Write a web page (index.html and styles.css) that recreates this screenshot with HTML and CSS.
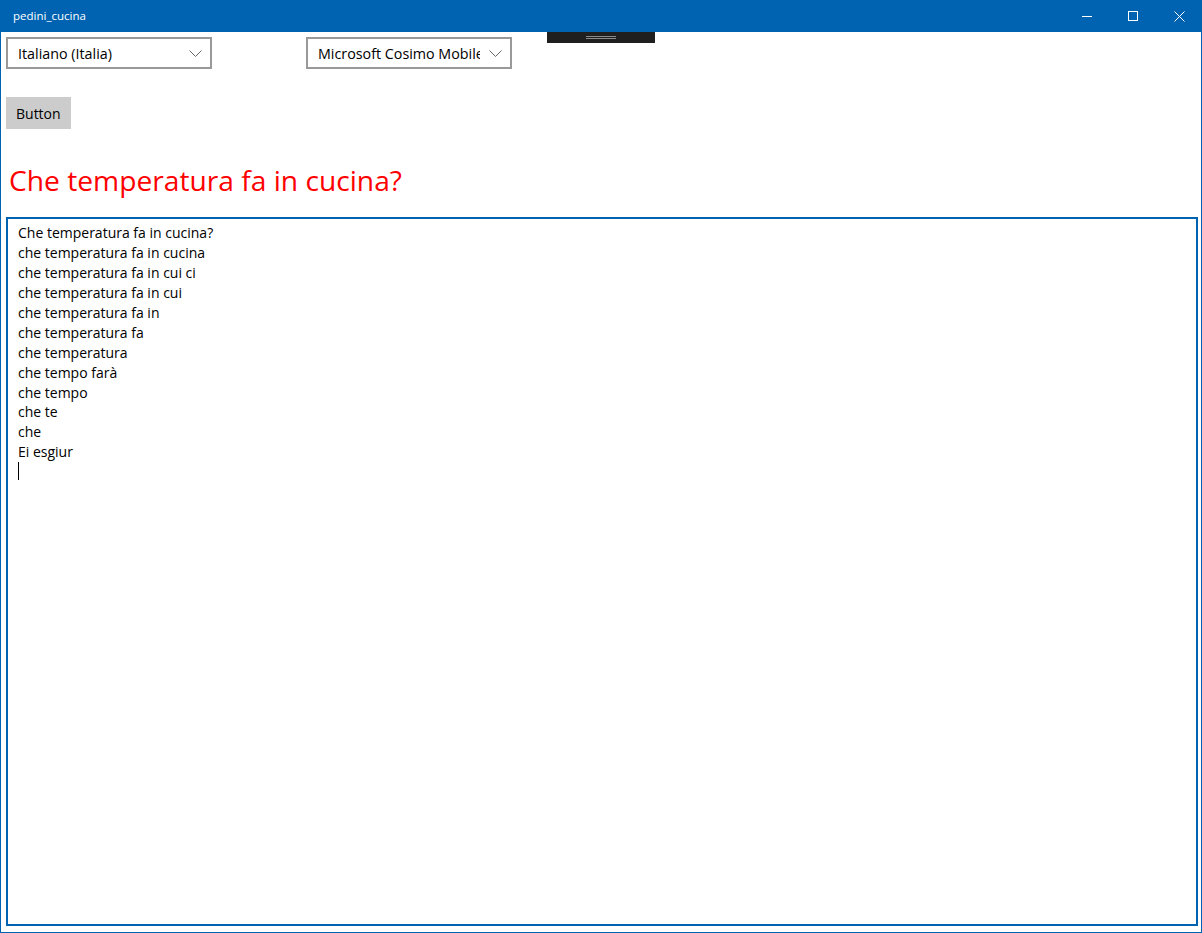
FILE: index.html
```html
<!DOCTYPE html>
<html lang="it">
<head>
<meta charset="utf-8">
<title>pedini_cucina</title>
<link rel="stylesheet" href="styles.css">
</head>
<body>
<div class="window">
  <header class="titlebar">
    <span class="title">pedini_cucina</span>
    <div class="controls">
      <span class="ctl"><svg width="10" height="10" viewBox="0 0 10 10"><path d="M0 5.5H10" stroke="#fff" stroke-width="1" fill="none"/></svg></span>
      <span class="ctl"><svg width="10" height="10" viewBox="0 0 10 10"><rect x="0.5" y="0.5" width="9" height="9" stroke="#fff" stroke-width="1" fill="none"/></svg></span>
      <span class="ctl"><svg width="11" height="11" viewBox="0 0 11 11"><path d="M0.5 0.5L10.5 10.5M10.5 0.5L0.5 10.5" stroke="#fff" stroke-width="1" fill="none"/></svg></span>
    </div>
  </header>
  <main class="content">
    <div class="debugbar"><span class="grip"></span></div>
    <div class="row">
      <div class="select">
        <span class="value">Italiano (Italia)</span>
        <span class="chev"><svg width="13" height="7" viewBox="0 0 13 7"><path d="M0.5 0.5L6.5 6.5L12.5 0.5" stroke="#666" stroke-width="1" fill="none"/></svg></span>
      </div>
      <div class="select">
        <span class="value">Microsoft Cosimo Mobile</span>
        <span class="chev"><svg width="13" height="7" viewBox="0 0 13 7"><path d="M0.5 0.5L6.5 6.5L12.5 0.5" stroke="#666" stroke-width="1" fill="none"/></svg></span>
      </div>
    </div>
    <button class="btn">Button</button>
    <h1 class="heading">Che temperatura fa in cucina?</h1>
    <div class="textbox">
      <div class="line">Che temperatura fa in cucina?</div>
      <div class="line">che temperatura fa in cucina</div>
      <div class="line">che temperatura fa in cui ci</div>
      <div class="line">che temperatura fa in cui</div>
      <div class="line">che temperatura fa in</div>
      <div class="line">che temperatura fa</div>
      <div class="line">che temperatura</div>
      <div class="line">che tempo farà</div>
      <div class="line">che tempo</div>
      <div class="line">che te</div>
      <div class="line">che</div>
      <div class="line">Ei esgiur</div>
      <div class="line"><span class="caret"></span></div>
    </div>
  </main>
</div>
</body>
</html>
```

FILE: styles.css
```css
* { box-sizing: border-box; }
html, body { margin: 0; padding: 0; }
body {
  width: 1202px;
  height: 933px;
  overflow: hidden;
  background: #fff;
  font-family: "Open Sans", "Noto Sans", sans-serif;
  color: #000;
}
.window {
  width: 1202px;
  height: 933px;
  display: flex;
  flex-direction: column;
}
.titlebar {
  height: 32px;
  flex: none;
  background: #0063b1;
  display: flex;
  align-items: center;
  justify-content: space-between;
}
.title {
  color: #fff;
  font-size: 11.5px;
  line-height: 14px;
  padding-left: 13px;
  margin-top: -1px;
}
.controls { display: flex; height: 32px; }
.ctl {
  width: 46px;
  height: 32px;
  display: flex;
  align-items: center;
  justify-content: center;
}
.ctl svg { display: block; }
.content {
  position: relative;
  flex: 1;
  border: 1px solid #0063b1;
  border-top: none;
  padding: 5px 3px 6px 5px;
  display: flex;
  flex-direction: column;
  align-items: flex-start;
  min-height: 0;
}
.debugbar {
  position: absolute;
  left: 546px;
  top: 0;
  width: 108px;
  height: 11px;
  background: #1f1f1f;
}
.grip {
  position: absolute;
  left: 39px;
  top: 4px;
  width: 30px;
  height: 3px;
  border-top: 1px solid #8a8a8a;
  border-bottom: 1px solid #8a8a8a;
}
.row {
  display: flex;
  gap: 94px;
}
.select {
  width: 206px;
  height: 32px;
  border: 2px solid #999;
  display: flex;
  align-items: center;
  font-size: 14.3px;
  background: #fff;
}
.value {
  flex: 1;
  min-width: 0;
  overflow: hidden;
  white-space: nowrap;
  padding-left: 10px;
}
.chev {
  width: 30px;
  flex: none;
  display: flex;
  justify-content: center;
  align-items: center;
  padding-left: 1px;
}
.chev svg { display: block; }
.btn {
  margin-top: 28px;
  width: 65px;
  height: 32px;
  border: none;
  background: #cccccc;
  font-family: inherit;
  font-size: 14px;
  color: #000;
  padding: 0 0 0 10px;
  text-align: left;
}
.heading {
  margin: 31px 0 0 3px;
  height: 40px;
  line-height: 40px;
  font-size: 28.2px;
  font-weight: normal;
  color: #ff0000;
}
.textbox {
  margin-top: 17px;
  align-self: stretch;
  flex: 1;
  border: 2px solid #0063b1;
  padding: 4px 10px;
  font-size: 14px;
  line-height: 19.95px;
}
.line { height: 19.95px; white-space: nowrap; }
.caret {
  display: block;
  width: 1px;
  height: 18px;
  background: #000;
}
```
